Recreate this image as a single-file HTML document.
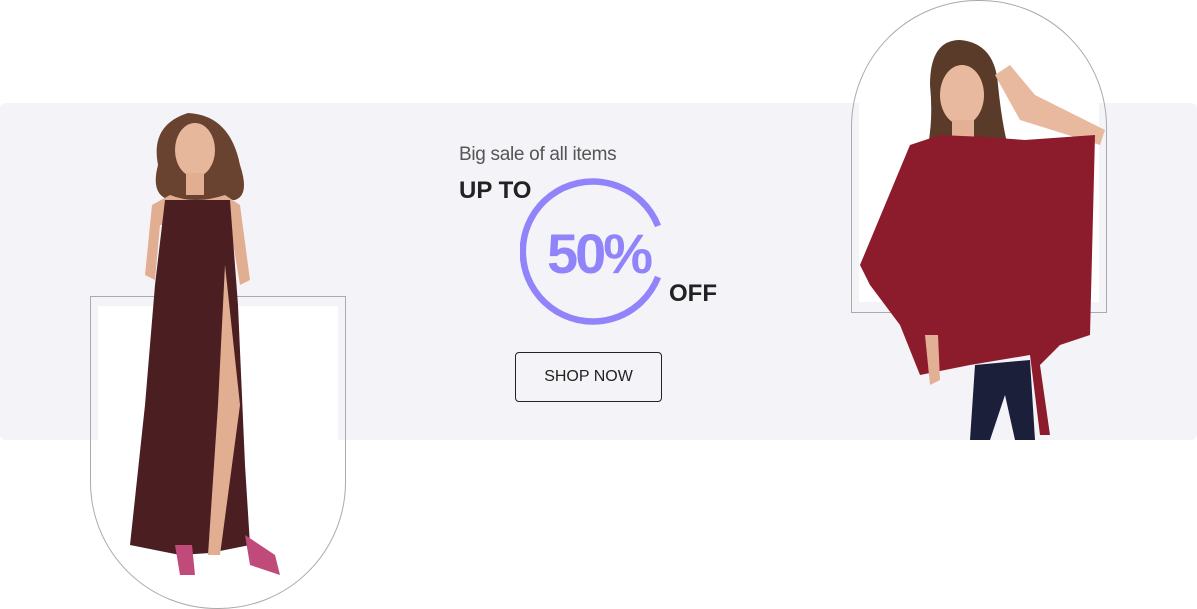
<!DOCTYPE html>
<html><head><style>
body{margin:0;width:1197px;height:609px;background:#fff;position:relative;overflow:hidden;font-family:"Liberation Sans",sans-serif}
.a{position:absolute}
</style></head><body>
<div class="a" style="left:0;top:103px;width:1197px;height:337px;background:#f4f4f8;border-radius:6px"></div>
<div class="a" style="left:90px;top:296px;width:254px;height:311px;border:1px solid #aaa;border-radius:0 0 127px 127px"></div>
<div class="a" style="left:98px;top:306px;width:240px;height:134px;background:#fff"></div>
<div class="a" style="left:851px;top:0;width:254px;height:311px;border:1px solid #aaa;border-radius:127px 127px 0 0"></div>
<div class="a" style="left:859px;top:100px;width:240px;height:202px;background:#fff"></div>
<svg class="a" style="left:100px;top:105px" width="200" height="480" viewBox="0 0 200 480">
<path d="M58 60 Q50 20 88 8 Q130 10 140 60 Q150 90 135 95 L70 95 Q50 90 58 60Z" fill="#6a4330"/>
<ellipse cx="95" cy="45" rx="20" ry="27" fill="#e7b79c"/>
<rect x="86" y="68" width="18" height="22" fill="#e2ae92"/>
<path d="M70 90 Q95 100 125 90 L140 100 L150 175 L140 180 L130 120 L60 120 L55 175 L45 170 L52 100Z" fill="#e2ae92"/>
<path d="M65 95 L130 95 L138 200 L145 360 L150 440 L110 448 L80 450 L30 440 L45 300 L55 180Z" fill="#4b1f22"/>
<path d="M125 160 L140 300 L120 450 L108 450 L118 300 Z" fill="#e2ae92"/>
<path d="M75 440 L80 470 L95 470 L92 440Z M145 430 L150 460 L180 470 L175 450Z" fill="#c04b7a"/>
</svg>
<svg class="a" style="left:860px;top:35px" width="250" height="405" viewBox="0 0 250 405">
<path d="M70 50 Q70 5 100 5 Q135 8 138 50 Q145 120 160 140 L60 140 Q75 100 70 50Z" fill="#5a3a28"/>
<ellipse cx="102" cy="60" rx="22" ry="30" fill="#e8b99f"/>
<path d="M135 40 L150 30 L175 60 L245 95 L240 110 L160 85Z" fill="#e8b99f"/>
<rect x="92" y="85" width="22" height="25" fill="#e4b095"/>
<path d="M50 110 L80 100 L125 102 L165 105 L235 100 L230 300 L200 310 L180 330 L190 400 L180 400 L170 320 L110 330 L60 340 L40 290 L10 250 L0 230 Z" fill="#8c1c2c"/>
<path d="M65 300 L70 350 L80 345 L78 300Z" fill="#e4b095"/>
<path d="M115 330 L170 325 L175 405 L155 405 L145 360 L130 405 L110 405Z" fill="#1c1f3a"/>
</svg>
<div class="a" style="left:459px;top:144px;font-size:19px;color:#555;letter-spacing:-0.3px">Big sale of all items</div>
<div class="a" style="left:459px;top:177px;font-size:24px;color:#222;font-weight:bold">UP TO</div>
<svg class="a" style="left:520px;top:177px" width="160" height="150" viewBox="0 0 160 150">
<path d="M138 49 A70 70 0 1 0 138 100" fill="none" stroke="#9184fb" stroke-width="6.5"/>
<text x="27" y="96" font-family="Liberation Sans" font-size="56" font-weight="bold" fill="#9184fb" letter-spacing="-3">50%</text>
</svg>
<div class="a" style="left:669px;top:280px;font-size:24px;color:#222;font-weight:bold">OFF</div>
<div class="a" style="left:515px;top:352px;width:145px;height:48px;border:1px solid #222;border-radius:4px;text-align:center;line-height:48px;font-size:16px;color:#222">SHOP NOW</div>
</body></html>
